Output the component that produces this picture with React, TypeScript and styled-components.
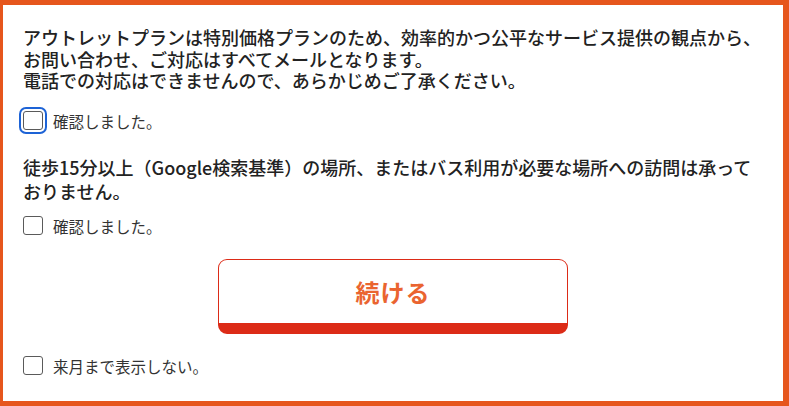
import React, { useState } from "react";
import styled, { createGlobalStyle } from "styled-components";

const GlobalStyle = createGlobalStyle`
  html, body {
    margin: 0;
    padding: 0;
    background: #e6561d;
  }
  body {
    font-family: "Noto Sans CJK JP", "Noto Sans", sans-serif;
  }
`;

const Frame = styled.div`
  width: 789px;
  height: 406px;
  box-sizing: border-box;
  padding: 5px 6px 5px 3px;
  background: #e6561d;
`;

const Panel = styled.div`
  height: 100%;
  background: #fff;
  box-sizing: border-box;
  padding: 22px 20px 0 20px;
  display: flex;
  flex-direction: column;
`;

const Notice = styled.div<{ $lh: number; $mt: number }>`
  margin-top: ${(p) => p.$mt}px;
  font-size: 18px;
  line-height: ${(p) => p.$lh}px;
  font-weight: 500;
  color: #222;
`;

const Line = styled.span`
  display: block;
`;

const CheckRow = styled.label<{ $mt: number }>`
  margin-top: ${(p) => p.$mt}px;
  height: 24px;
  display: flex;
  align-items: center;
  gap: 10px;
  font-size: 15.5px;
  color: #333;
  cursor: pointer;
`;

const Box = styled.span<{ $focused?: boolean; $on?: boolean }>`
  width: 20px;
  height: 19px;
  box-sizing: border-box;
  border: 1px solid #5a5a5a;
  border-radius: 3px;
  background: ${(p) => (p.$on ? "#1d63d6" : "#fff")};
  box-shadow: ${(p) => (p.$focused ? "0 0 0 2px #fff, 0 0 0 4px #1d63d6" : "none")};
  flex-shrink: 0;
`;

const ButtonWrap = styled.div`
  margin-top: 21px;
  display: flex;
  justify-content: center;
`;

const ContinueButton = styled.button`
  width: 350px;
  height: 75px;
  box-sizing: border-box;
  background: #fff;
  border: 1px solid #dc2b17;
  border-bottom-width: 11px;
  border-radius: 9px;
  color: #ea6430;
  font-family: inherit;
  font-size: 24px;
  font-weight: 700;
  letter-spacing: 1px;
  cursor: pointer;
  padding: 0;
`;

const Check = ({ label, mt, focused }: { label: string; mt: number; focused?: boolean }) => {
  const [on, setOn] = useState(false);
  return (
    <CheckRow $mt={mt} onClick={() => setOn(!on)}>
      <Box $focused={focused} $on={on} />
      {label}
    </CheckRow>
  );
};

const App = () => {
  return (
    <Frame>
      <GlobalStyle />
      <Panel>
        <Notice $lh={21.5} $mt={0}>
          <Line>アウトレットプランは特別価格プランのため、効率的かつ公平なサービス提供の観点から、</Line>
          <Line>お問い合わせ、ご対応はすべてメールとなります。</Line>
          <Line>電話での対応はできませんので、あらかじめご了承ください。</Line>
        </Notice>
        <Check label="確認しました。" mt={17} focused />
        <Notice $lh={24} $mt={22}>
          徒歩15分以上（Google検索基準）の場所、またはバス利用が必要な場所への訪問は承っておりません。
        </Notice>
        <Check label="確認しました。" mt={11} />
        <ButtonWrap>
          <ContinueButton>続ける</ContinueButton>
        </ButtonWrap>
        <Check label="来月まで表示しない。" mt={20} />
      </Panel>
    </Frame>
  );
};

export default App;
